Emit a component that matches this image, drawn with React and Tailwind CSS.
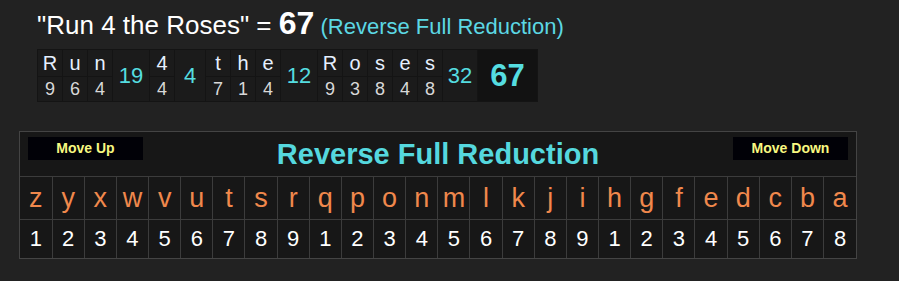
const phrase = [
  { letters: ['R', 'u', 'n'], values: [9, 6, 4], sum: 19, sumW: 'w-[36px]' },
  { letters: ['4'], values: [4], sum: 4, sumW: 'w-[30px]' },
  { letters: ['t', 'h', 'e'], values: [7, 1, 4], sum: 12, sumW: 'w-[36px]' },
  { letters: ['R', 'o', 's', 'e', 's'], values: [9, 3, 8, 4, 8], sum: 32, sumW: 'w-[34px]' },
]

const alphabet = 'zyxwvutsrqponmlkjihgfedcba'.split('')

const Breakdown = () => (
  <table className="border-separate border-spacing-[1px] bg-[#141414]">
    <tbody>
      <tr>
        {phrase.map((word, i) => (
          <>
            {word.letters.map((l, j) => (
              <td key={`${i}-l-${j}`} className="w-[24px] h-[26px] p-0 bg-[#1b1b1b] text-center text-[20px] leading-none text-[#e6f0ff]">
                {l}
              </td>
            ))}
            <td key={`${i}-s`} rowSpan={2} className={`${word.sumW} p-0 bg-[#1b1b1b] text-center text-[22px] leading-none text-[#55dde0]`}>
              {word.sum}
            </td>
          </>
        ))}
        <td rowSpan={2} className="w-[59px] p-0 bg-[#121212] text-center text-[31px] font-bold leading-none text-[#55dde0]">
          67
        </td>
      </tr>
      <tr>
        {phrase.map((word, i) =>
          word.values.map((v, j) => (
            <td key={`${i}-v-${j}`} className="h-[24px] p-0 bg-[#1b1b1b] text-center text-[18px] leading-none text-[#d8d8d8]">
              {v}
            </td>
          ))
        )}
      </tr>
    </tbody>
  </table>
)

const MoveButton = ({ label }) => (
  <div className="w-[115px] h-[23px] bg-[#010107] flex items-center justify-center text-[14px] font-bold text-[#f8f880]">
    {label}
  </div>
)

const App = () => {
  return (
    <div className="min-h-[281px] bg-[#222222] font-['Liberation_Sans',Arial,sans-serif] pt-[7px]">
      <div className="pl-[37px] leading-[33px] whitespace-nowrap">
        <span className="text-[26px] text-white">"Run 4 the Roses" = </span>
        <span className="text-[32px] font-bold text-white">67</span>
        <span className="text-[22px] text-[#5cd8e4]"> (Reverse Full Reduction)</span>
      </div>

      <div className="pl-[37px] mt-[4px]">
        <Breakdown />
      </div>

      <div className="ml-[19px] mr-[42px] mt-[29px] border border-[#444444] bg-[#171717]">
        <div className="h-[44px] flex items-start justify-between px-[8px] pt-[5px]">
          <MoveButton label="Move Up" />
          <div className="text-[29px] font-bold text-[#55d8de] leading-none pt-[3px]">Reverse Full Reduction</div>
          <MoveButton label="Move Down" />
        </div>
        <table className="w-full table-fixed border-collapse">
          <tbody>
            <tr>
              {alphabet.map((l) => (
                <td key={l} className="h-[43px] p-0 border border-[#3c3c3c] first:border-l-0 last:border-r-0 text-center text-[27px] leading-none text-[#f0884c]">
                  {l}
                </td>
              ))}
            </tr>
            <tr>
              {alphabet.map((l, i) => (
                <td key={l} className="h-[38px] p-0 border border-[#3c3c3c] border-b-0 first:border-l-0 last:border-r-0 text-center text-[22px] leading-none text-white">
                  {(i % 9) + 1}
                </td>
              ))}
            </tr>
          </tbody>
        </table>
      </div>
    </div>
  )
}

export default App
